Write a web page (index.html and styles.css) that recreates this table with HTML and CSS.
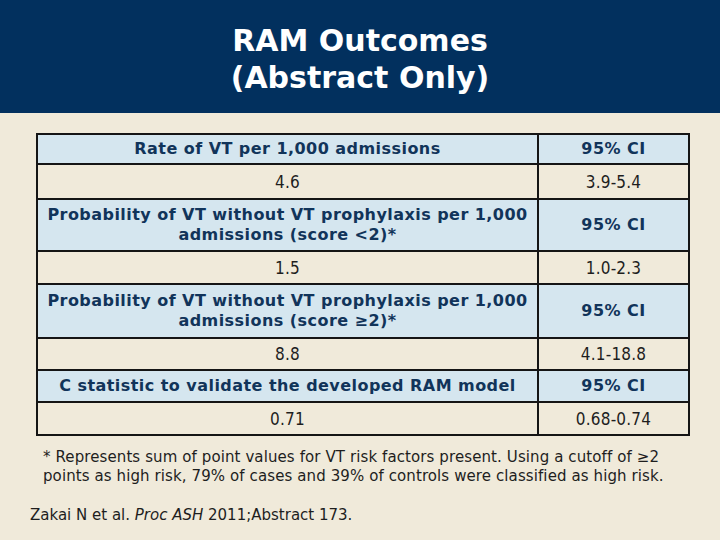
FILE: index.html
```html
<!DOCTYPE html>
<html>
<head>
<meta charset="utf-8">
<link rel="stylesheet" href="styles.css">
</head>
<body>
<header class="banner">
  <h1 class="title">RAM Outcomes<br>(Abstract Only)</h1>
</header>
<main class="content">
  <table class="outcomes">
    <tr class="head h1row">
      <th>Rate of VT per 1,000 admissions</th>
      <th class="ci">95% CI</th>
    </tr>
    <tr class="data d35">
      <td>4.6</td>
      <td class="ci">3.9-5.4</td>
    </tr>
    <tr class="head h52">
      <th>Probability of VT without VT prophylaxis per 1,000<br>admissions (score &lt;2)*</th>
      <th class="ci">95% CI</th>
    </tr>
    <tr class="data d33">
      <td>1.5</td>
      <td class="ci">1.0-2.3</td>
    </tr>
    <tr class="head h54">
      <th>Probability of VT without VT prophylaxis per 1,000<br>admissions (score ≥2)*</th>
      <th class="ci">95% CI</th>
    </tr>
    <tr class="data d32">
      <td>8.8</td>
      <td class="ci">4.1-18.8</td>
    </tr>
    <tr class="head h32">
      <th>C statistic to validate the developed RAM model</th>
      <th class="ci">95% CI</th>
    </tr>
    <tr class="data d33">
      <td>0.71</td>
      <td class="ci">0.68-0.74</td>
    </tr>
  </table>
  <p class="note">* Represents sum of point values for VT risk factors present. Using a cutoff of ≥2<br>points as high risk, 79% of cases and 39% of controls were classified as high risk.</p>
  <p class="cite">Zakai N et al. <em>Proc ASH</em> 2011;Abstract 173.</p>
</main>
</body>
</html>
```
FILE: styles.css
```css
html, body {
  margin: 0;
  padding: 0;
}
body {
  width: 720px;
  height: 540px;
  background: #f0eada;
  overflow: hidden;
  font-family: "DejaVu Sans", Verdana, sans-serif;
}
.banner {
  height: 113px;
  background: #02305e;
  display: flex;
  align-items: center;
  justify-content: center;
}
.title {
  margin: 0;
  color: #ffffff;
  font-family: "DejaVu Sans", sans-serif;
  font-weight: bold;
  font-size: 30px;
  line-height: 37px;
  text-align: center;
  padding-top: 4px;
}
.content {
  padding-top: 20px;
}
.outcomes {
  margin-left: 36px;
  width: 654px;
  border-collapse: collapse;
  border: 2px solid #151515;
}
.outcomes th,
.outcomes td {
  border: 2px solid #151515;
  padding: 0 4px;
  text-align: center;
  line-height: 20px;
}
.outcomes th {
  background: #d5e6ef;
  color: #11345a;
  font-weight: bold;
  font-size: 16px;
  letter-spacing: 0.45px;
}
.outcomes td {
  color: #1e1e1e;
  font-weight: normal;
  font-family: "DejaVu Sans Condensed", "DejaVu Sans", sans-serif;
  font-size: 17px;
  letter-spacing: 0.2px;
}
.outcomes .ci {
  width: 141px;
}
.h1row { height: 30px; }
.d35 { height: 35px; }
.h52 { height: 52px; }
.d33 { height: 33px; }
.h54 { height: 54px; }
.d32 { height: 32px; }
.h32 { height: 32px; }
.note {
  margin: 12px 0 0 43px;
  font-family: "DejaVu Sans", sans-serif;
  font-size: 15px;
  letter-spacing: 0.1px;
  line-height: 19px;
  color: #1e1e1e;
}
.cite {
  margin: 20px 0 0 30px;
  font-family: "DejaVu Sans", sans-serif;
  font-size: 15px;
  line-height: 19px;
  color: #1e1e1e;
}
```
